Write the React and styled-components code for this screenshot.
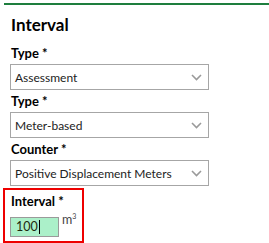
import React from "react";
import styled, { createGlobalStyle } from "styled-components";

const GlobalStyle = createGlobalStyle`
  body {
    margin: 0;
    background: #ffffff;
    font-family: Lato, "Open Sans", sans-serif;
    color: #000000;
  }
`;

const Panel = styled.div`
  width: 269px;
  height: 243px;
  overflow: hidden;
  padding-top: 3px;
  box-sizing: border-box;
`;

const TopBar = styled.div`
  height: 2px;
  margin-left: 4px;
  background: #1e7e3e;
`;

const Body = styled.div`
  padding: 0 0 0 10px;
`;

const Title = styled.h2`
  margin: 10px 0 0 1px;
  font-size: 17px;
  line-height: 20px;
  font-weight: 700;
`;

const Field = styled.div`
  display: flex;
  flex-direction: column;
  margin-top: ${(p) => p.gap || 3}px;
`;

const Label = styled.label`
  font-size: 13px;
  font-weight: 700;
  line-height: 16px;
  margin: 0 0 3px 1px;
`;

const Select = styled.div`
  width: 199px;
  height: 26px;
  box-sizing: border-box;
  border: 1px solid #a6a6a6;
  display: flex;
  align-items: center;
  justify-content: space-between;
  padding: 0 6px 0 4px;
  font-size: 12px;
  color: #222;
`;

const Highlight = styled.div`
  margin: 2px 0 0 3px;
  width: 81px;
  height: 55px;
  box-sizing: border-box;
  border: 2px solid #ee0000;
  padding: 3px 0 0 5px;
  display: flex;
  flex-direction: column;
`;

const InputRow = styled.div`
  display: flex;
  align-items: flex-start;
  margin-top: 5px;
`;

const Input = styled.div`
  width: 49px;
  height: 20px;
  box-sizing: border-box;
  border: 1px solid #9a9a9a;
  background: #abf0c9;
  font-size: 12.5px;
  line-height: 18px;
  padding-left: 5px;
  display: flex;
  align-items: center;
  color: #1d2a10;
`;

const Caret = styled.span`
  display: inline-block;
  width: 1px;
  height: 14px;
  background: #000;
  margin-left: 1px;
`;

const Unit = styled.span`
  margin: -5px 0 0 3px;
  font-size: 12.5px;
  color: #444;
  sup {
    font-size: 7px;
  }
`;

const Chevron = () => (
  <svg width="11" height="7" viewBox="0 0 11 7">
    <path d="M1 1 L5.5 5.5 L10 1" fill="none" stroke="#9a9a9a" strokeWidth="1.6" />
  </svg>
);

const Dropdown = ({ value }) => (
  <Select>
    <span>{value}</span>
    <Chevron />
  </Select>
);

export default function App() {
  return (
    <Panel>
      <GlobalStyle />
      <TopBar />
      <Body>
        <Title>Interval</Title>
        <Field gap={10}>
          <Label>Type *</Label>
          <Dropdown value="Assessment" />
        </Field>
        <Field>
          <Label>Type *</Label>
          <Dropdown value="Meter-based" />
        </Field>
        <Field>
          <Label>Counter *</Label>
          <Dropdown value="Positive Displacement Meters" />
        </Field>
      </Body>
      <Highlight>
        <Label>Interval *</Label>
        <InputRow>
          <Input>
            100
            <Caret />
          </Input>
          <Unit>
            m<sup>3</sup>
          </Unit>
        </InputRow>
      </Highlight>
    </Panel>
  );
}
